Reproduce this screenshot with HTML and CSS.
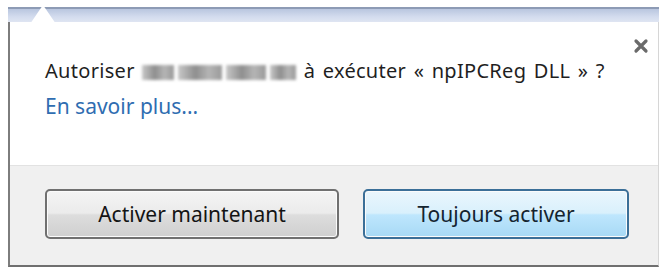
FILE: index.html
```html
<!DOCTYPE html>
<html lang="fr">
<head>
    <meta charset="UTF-8">
    <meta name="viewport" content="width=device-width, initial-scale=1.0">
    <title>Autoriser le plug-in</title>
    <link rel="stylesheet" href="styles.css">
</head>
<body>
    <div class="bubble">
        <div class="toolbar-edge">
            <div class="arrow"></div>
        </div>
        <div class="panel">
            <div class="content">
                <button class="close" aria-label="Fermer">
                    <svg width="16" height="16" viewBox="0 0 16 16">
                        <path d="M3 3 L13 13 M13 3 L3 13" stroke="#6a6a6a" stroke-width="3.2" stroke-linecap="round"/>
                    </svg>
                </button>
                <p class="question">
                    Autoriser
                    <span class="redacted">
                        <span class="blk b1"></span><span class="blk b2"></span><span class="blk b3"></span><span class="blk b4"></span>
                    </span>
                    à exécuter « npIPCReg DLL » ?
                </p>
                <a class="more" href="#">En savoir plus...</a>
            </div>
            <div class="footer">
                <button class="btn">Activer maintenant</button>
                <button class="btn btn-hot">Toujours activer</button>
            </div>
        </div>
    </div>
</body>
</html>
```

FILE: styles.css
```css
* {
    margin: 0;
    padding: 0;
    box-sizing: border-box;
}

body {
    background: #fff;
    font-family: 'Segoe UI', 'Noto Sans', 'Open Sans', sans-serif;
    color: #222;
}

.bubble {
    margin: 7px 0 0 8px;
    width: 651px;
}

.toolbar-edge {
    position: relative;
    height: 15px;
    border-top: 2px solid #8d9bb5;
    background: linear-gradient(#b9c6df, #d3dcee 60%, #dfe5f2);
}

/* white tail of the bubble cut into the toolbar */
.arrow {
    position: absolute;
    left: 22px;
    top: -4px;
    width: 0;
    height: 0;
    border-left: 13px solid transparent;
    border-right: 13px solid transparent;
    border-bottom: 19px solid #fff;
}

.panel {
    border-left: 2px solid #7d7d7d;
    border-right: 1px solid #d6d6d6;
    border-bottom: 2px solid #6f6f6f;
    background: #fff;
}

.content {
    position: relative;
    height: 143px;
    padding: 36px 0 0 35px;
}

.close {
    position: absolute;
    top: 14px;
    right: 7px;
    width: 20px;
    height: 20px;
    border: none;
    background: none;
    display: flex;
    align-items: center;
    justify-content: center;
}

.question {
    font-size: 20px;
    line-height: 26px;
    letter-spacing: 0.3px;
    word-spacing: 2px;
    color: #1f1f1f;
    white-space: nowrap;
}

.redacted {
    display: inline-flex;
    gap: 4px;
    vertical-align: -2px;
    filter: blur(1.5px);
}

.blk {
    height: 15px;
    background: linear-gradient(90deg, #c8c8c8, #8e8e8e 40%, #b5b5b5 70%, #999);
}

.b1 { width: 32px; }
.b2 { width: 44px; }
.b3 { width: 40px; }
.b4 { width: 26px; }

.more {
    display: inline-block;
    margin-top: 8px;
    font-size: 21px;
    color: #2f6db1;
    text-decoration: none;
}

.footer {
    display: flex;
    gap: 24px;
    padding: 23px 0 26px 35px;
    background: #f0f0f0;
    border-top: 1px solid #e2e2e2;
}

.btn {
    width: 294px;
    height: 50px;
    border: 2px solid #707070;
    border-radius: 5px;
    background: linear-gradient(#f4f4f4, #ebebeb 48%, #dddddd 52%, #cfcfcf);
    box-shadow: inset 0 0 0 1px #fbfbfb;
    font-family: inherit;
    font-size: 21px;
    color: #141414;
}

.btn-hot {
    width: 266px;
    border-color: #3b6f98;
    background: linear-gradient(#eaf6fd, #d9f0fc 48%, #bee6fd 52%, #a7d9f5);
    color: #142430;
}
```
